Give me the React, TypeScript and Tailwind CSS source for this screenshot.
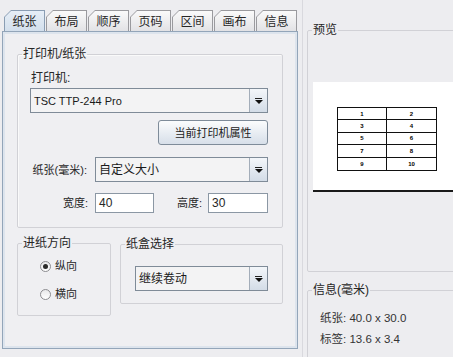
import React from 'react'

const tabs = ['纸张', '布局', '顺序', '页码', '区间', '画布', '信息']

function Tab({ label, active }: { label: string; active?: boolean }) {
  return (
    <div
      className={`w-[41px] h-[21px] p-[1px] pb-0 [clip-path:polygon(7px_0,100%_0,100%_100%,0_100%,0_7px)] ${
        active ? 'bg-[#8a9db3]' : 'bg-[#9a9a9e]'
      }`}
    >
      <div
        className={`h-full flex items-center justify-center pt-[1px] text-[12px] [clip-path:polygon(6px_0,100%_0,100%_100%,0_100%,0_6px)] ${
          active
            ? 'bg-gradient-to-b from-[#e6eef7] to-[#d3dfec]'
            : 'bg-gradient-to-b from-[#fafafa] to-[#e2e2e5]'
        }`}
      >
        {label}
      </div>
    </div>
  )
}

function Combo({ value, className = '' }: { value: string; className?: string }) {
  return (
    <div className={`flex h-[25px] border border-[#7f8b98] bg-[#f3f3f4] ${className}`}>
      <div className="flex-1 flex items-center pl-[3px] text-[12px] text-[#1a1a1a]">{value}</div>
      <div className="w-[18px] border-l border-[#a3adb9] bg-gradient-to-b from-[#f3f6fa] to-[#d3dce7] flex flex-col items-center justify-center">
        <div className="w-[7px] h-[1px] bg-[#222] mb-[1px]" />
        <div className="w-0 h-0 border-l-[4px] border-r-[4px] border-t-[4px] border-l-transparent border-r-transparent border-t-[#111]" />
      </div>
    </div>
  )
}

function Input({ value, className = '' }: { value: string; className?: string }) {
  return (
    <div className={`h-[20px] border border-[#8b97a4] bg-white flex items-center pl-[3px] text-[12px] ${className}`}>
      {value}
    </div>
  )
}

function Radio({ label, checked }: { label: string; checked?: boolean }) {
  return (
    <div className="flex items-center h-[16px]">
      <div className="w-[11px] h-[11px] rounded-full border border-[#8c8c90] bg-gradient-to-b from-[#e8e8ea] to-white flex items-center justify-center">
        {checked && <div className="w-[5px] h-[5px] rounded-full bg-[#2a2a2a]" />}
      </div>
      <span className="ml-[4px]">{label}</span>
    </div>
  )
}

export default function App() {
  const cells = [1, 2, 3, 4, 5, 6, 7, 8, 9, 10]

  return (
    <div className="w-[453px] h-[357px] overflow-hidden flex bg-[#ededf0] text-[11px] leading-[16px] text-[#262626] font-['Liberation_Sans','Noto_Sans_CJK_SC',sans-serif]">
      {/* Left: tabbed settings */}
      <div className="w-[302px] shrink-0 pl-[2px] pt-[10px] flex flex-col">
        <div className="flex gap-[1px] pl-[2px]">
          {tabs.map((t, i) => (
            <Tab key={t} label={t} active={i === 0} />
          ))}
        </div>
        <div className="w-[296px] h-[318px] border border-[#93a5b9] shadow-[inset_0_0_0_2px_#dde4ed] bg-[#efeff2] px-[14px] pt-[14px]">
          {/* 打印机/纸张 */}
          <fieldset className="w-[266px] border border-[#d1d1d6] rounded-[2px] shadow-[inset_1px_1px_0_#fafafa]">
            <legend className="ml-[4px] px-[1px] text-[12px]">打印机/纸张</legend>
            <div className="pl-[12px] pr-[14px] pb-[14px]">
              <div className="mt-[8px] pl-[1px] text-[12px]">打印机:</div>
              <Combo value="TSC TTP-244 Pro" className="mt-[2px] [&>div:first-child]:text-[11px]" />
              <div className="flex justify-end mt-[7px]">
                <div className="w-[110px] h-[25px] border border-[#7e8b99] rounded-[3px] bg-gradient-to-b from-[#fbfcfd] to-[#d7dfe9] flex items-center justify-center text-[#1a1a1a]">
                  当前打印机属性
                </div>
              </div>
              <div className="flex items-center mt-[12px]">
                <div className="w-[65px] shrink-0 text-right pr-[4px] -ml-[4px] whitespace-nowrap">纸张(毫米):</div>
                <Combo value="自定义大小" className="w-[173px] ml-auto" />
              </div>
              <div className="flex items-center justify-end mt-[11px]">
                <span className="w-[54px] text-right pr-[7px]">宽度:</span>
                <Input value="40" className="w-[59px]" />
                <span className="w-[54px] text-right pr-[6px]">高度:</span>
                <Input value="30" className="w-[60px]" />
              </div>
            </div>
          </fieldset>

          <div className="flex items-start gap-[9px] mt-[7px]">
            {/* 进纸方向 */}
            <fieldset className="w-[94px] h-[81px] border border-[#d1d1d6] rounded-[2px]">
              <legend className="ml-[4px] px-[1px] text-[12px]">进纸方向</legend>
              <div className="pl-[22px] pt-[7px] flex flex-col gap-[12px]">
                <Radio label="纵向" checked />
                <Radio label="横向" />
              </div>
            </fieldset>
            {/* 纸盒选择 */}
            <fieldset className="w-[163px] border border-[#d1d1d6] rounded-[2px] mt-[1px]">
              <legend className="ml-[4px] px-[1px] text-[12px]">纸盒选择</legend>
              <div className="pl-[14px] pr-[14px] pt-[14px] pb-[12px]">
                <Combo value="继续卷动" className="h-[24px]" />
              </div>
            </fieldset>
          </div>
        </div>
      </div>

      {/* Right: preview + info */}
      <div className="flex-1 border-l border-[#d9d9de] pl-[4px] pt-[22px] flex flex-col">
        <fieldset className="w-[170px] h-[250px] shrink-0 border border-[#d1d1d6] rounded-[2px]">
          <legend className="ml-[4px] px-[1px] text-[12px]">预览</legend>
          <div className="ml-[5px] mt-[44px] h-[110px] bg-white border-b-2 border-[#1a1a1a] pt-[25px] pl-[24px]">
            <div className="w-[100px] grid grid-cols-2 border border-[#111] text-[6px] leading-[6px] font-bold text-black">
              {cells.map((n, i) => (
                <div
                  key={n}
                  className={`h-[12.4px] flex items-center justify-center ${i % 2 === 0 ? 'border-r border-[#111]' : ''} ${
                    i < 8 ? 'border-b border-[#111]' : ''
                  }`}
                >
                  {n}
                </div>
              ))}
            </div>
          </div>
        </fieldset>

        <fieldset className="w-[170px] h-[120px] shrink-0 mt-[10px] border border-[#d1d1d6] rounded-[2px]">
          <legend className="ml-[4px] px-[1px] text-[12px]">信息(毫米)</legend>
          <div className="pl-[12px] pt-[12px] flex flex-col gap-[5px] text-[11.5px] text-[#333]">
            <div>纸张: 40.0 x 30.0</div>
            <div>标签: 13.6 x 3.4</div>
          </div>
        </fieldset>
      </div>
    </div>
  )
}
